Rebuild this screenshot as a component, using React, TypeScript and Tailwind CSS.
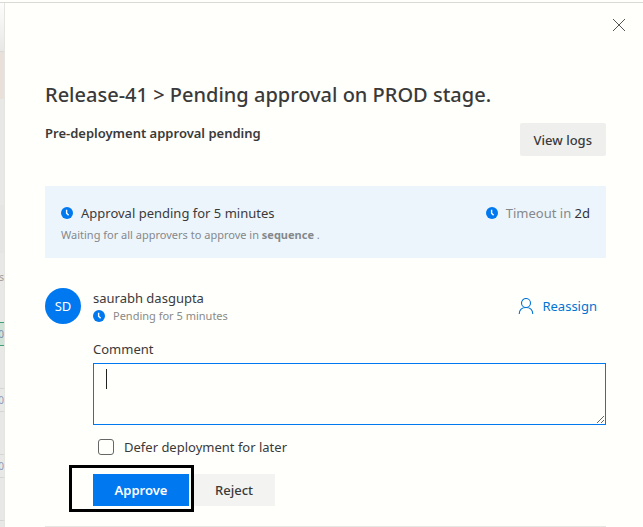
import { useState } from "react";

function ClockIcon() {
  return (
    <svg className="size-3 shrink-0" viewBox="0 0 12 12" aria-hidden="true">
      <circle cx="6" cy="6" r="6" fill="#0078ef" />
      <path d="M5.6 2.800v3.400l2 2" fill="none" stroke="#ffffff" strokeWidth="1.4" />
    </svg>
  );
}

function CloseIcon() {
  return (
    <svg className="size-3" viewBox="0 0 12 12" aria-hidden="true">
      <path d="M0 0l12 12M12 0L0 12" fill="none" stroke="#555555" strokeWidth="1" />
    </svg>
  );
}

function PersonIcon() {
  return (
    <svg className="size-4 shrink-0" viewBox="0 0 16 16" aria-hidden="true">
      <g fill="none" stroke="#0074d4" strokeWidth="1.1">
        <circle cx="8" cy="5" r="4.5" />
        <path d="M1.2 16C1.4 12.2 4 9.5 8 9.5s6.600 2.700 6.800 6.500" />
      </g>
    </svg>
  );
}

function StageRow({ text }: { text: string }) {
  return (
    <div className="flex h-6 items-center justify-end border-y border-[#d6d7d4] text-[#8f9bb8]">
      {text}
    </div>
  );
}

function BackgroundPage() {
  return (
    <div className="flex w-[5px] shrink-0 flex-col overflow-hidden border-r border-[#e4e4e1] bg-[#e8e9e6] text-[10px] leading-3">
      <div className="h-12 shrink-0 bg-linear-to-b from-[#fdfdfb] to-[#e8e9e6]" />
      <div className="h-12 shrink-0 border-t border-[#d9d9d6] bg-[#e9e0da]" />
      <div className="h-[106px] shrink-0" />
      <div className="h-12 shrink-0 bg-[#e5e5e3]" />
      <div className="mt-4 flex h-4 shrink-0 items-center justify-end text-[#a39c98]">s</div>
      <div className="mt-[37px] flex h-6 shrink-0 items-center justify-end border-y border-[#3f9f76] bg-[#cfe2d6] text-[#7f8fae]">
        0
      </div>
      <div className="mt-[42px] flex flex-col gap-[42px]">
        <StageRow text="0" />
        <StageRow text="0" />
        <StageRow text="0" />
      </div>
    </div>
  );
}

export default function App() {
  const [comment, setComment] = useState("");
  const [deferred, setDeferred] = useState(false);

  return (
    <div className="flex h-screen flex-col overflow-hidden bg-[#fffffb] font-['Noto_Sans','Open_Sans',sans-serif] text-[13px] leading-5 text-[#3a3a3a]">
      <div className="mt-0.5 h-px shrink-0 bg-[#d9d9d6]" />
      <div className="flex min-h-0 flex-1">
        <BackgroundPage />
        <main className="flex min-w-0 flex-1 flex-col pl-10">
          <div className="flex justify-end pt-4 pr-[18px]">
            <button type="button" aria-label="Close" className="flex size-3">
              <CloseIcon />
            </button>
          </div>

          <div className="pr-[37px]">
            <h1 className="mt-12 text-xl leading-8 font-medium">
              Release-41 &gt; Pending approval on PROD stage.
            </h1>
            <div className="mt-3 flex items-start justify-between">
              <h2 className="font-semibold">Pre-deployment approval pending</h2>
              <button type="button" className="h-[33px] rounded-xs bg-[#efefee] px-3.5 font-medium">
                View logs
              </button>
            </div>

            <section className="mt-[30px] flex h-[72px] justify-between bg-[#edf5fc] px-4 pt-[17px]">
              <div>
                <div className="flex items-center gap-2">
                  <ClockIcon />
                  <span>Approval pending for 5 minutes</span>
                </div>
                <p className="mt-0.5 text-[11px] text-[#85888b]">
                  Waiting for all approvers to approve in <b className="font-bold">sequence</b> .
                </p>
              </div>
              <div className="flex h-5 items-center gap-2">
                <ClockIcon />
                <span className="text-[#85888b]">
                  Timeout in <span className="text-[#333333]">2d</span>
                </span>
              </div>
            </section>

            <section className="mt-[30px] flex items-center justify-between">
              <div className="flex items-center gap-3">
                <div className="flex size-9 items-center justify-center rounded-full bg-[#0078ef] text-white">
                  SD
                </div>
                <div>
                  <p>saurabh dasgupta</p>
                  <div className="flex h-4 items-center gap-2 text-[11px] text-[#8a8a88]">
                    <ClockIcon />
                    <span>Pending for 5 minutes</span>
                  </div>
                </div>
              </div>
              <button type="button" className="mr-[9px] flex items-center gap-2 text-[#0074d4]">
                <PersonIcon />
                Reassign
              </button>
            </section>

            <form className="mt-[15px] pl-12" onSubmit={(event) => event.preventDefault()}>
              <label htmlFor="comment" className="block">
                Comment
              </label>
              <div className="relative mt-1">
                <textarea
                  id="comment"
                  value={comment}
                  onChange={(event) => setComment(event.target.value)}
                  className="block h-[62px] w-full resize border border-[#0078ef] bg-transparent px-3 py-1 outline-none"
                />
                <span className="pointer-events-none absolute top-1.5 left-[13px] h-5 w-px bg-[#222222]" />
              </div>
              <div className="mt-3 ml-[5px] flex items-center gap-2.5">
                <input
                  id="defer"
                  type="checkbox"
                  checked={deferred}
                  onChange={(event) => setDeferred(event.target.checked)}
                  className="size-4 appearance-none rounded-[3px] border border-[#666666] checked:bg-[#0078ef]"
                />
                <label htmlFor="defer">Defer deployment for later</label>
              </div>
              <div className="mt-[17px] flex gap-1">
                <div className="relative">
                  <button type="submit" className="h-8 w-24 bg-[#0078ef] font-semibold text-white">
                    Approve
                  </button>
                  <span className="pointer-events-none absolute -top-[9px] -right-[5px] -bottom-1.5 -left-6 border-3 border-black" />
                </div>
                <button type="button" className="h-8 w-[82px] bg-[#f3f3f1] font-medium">
                  Reject
                </button>
              </div>
            </form>
            <hr className="mt-5 border-[#e6e6e3]" />
          </div>
        </main>
      </div>
    </div>
  );
}
